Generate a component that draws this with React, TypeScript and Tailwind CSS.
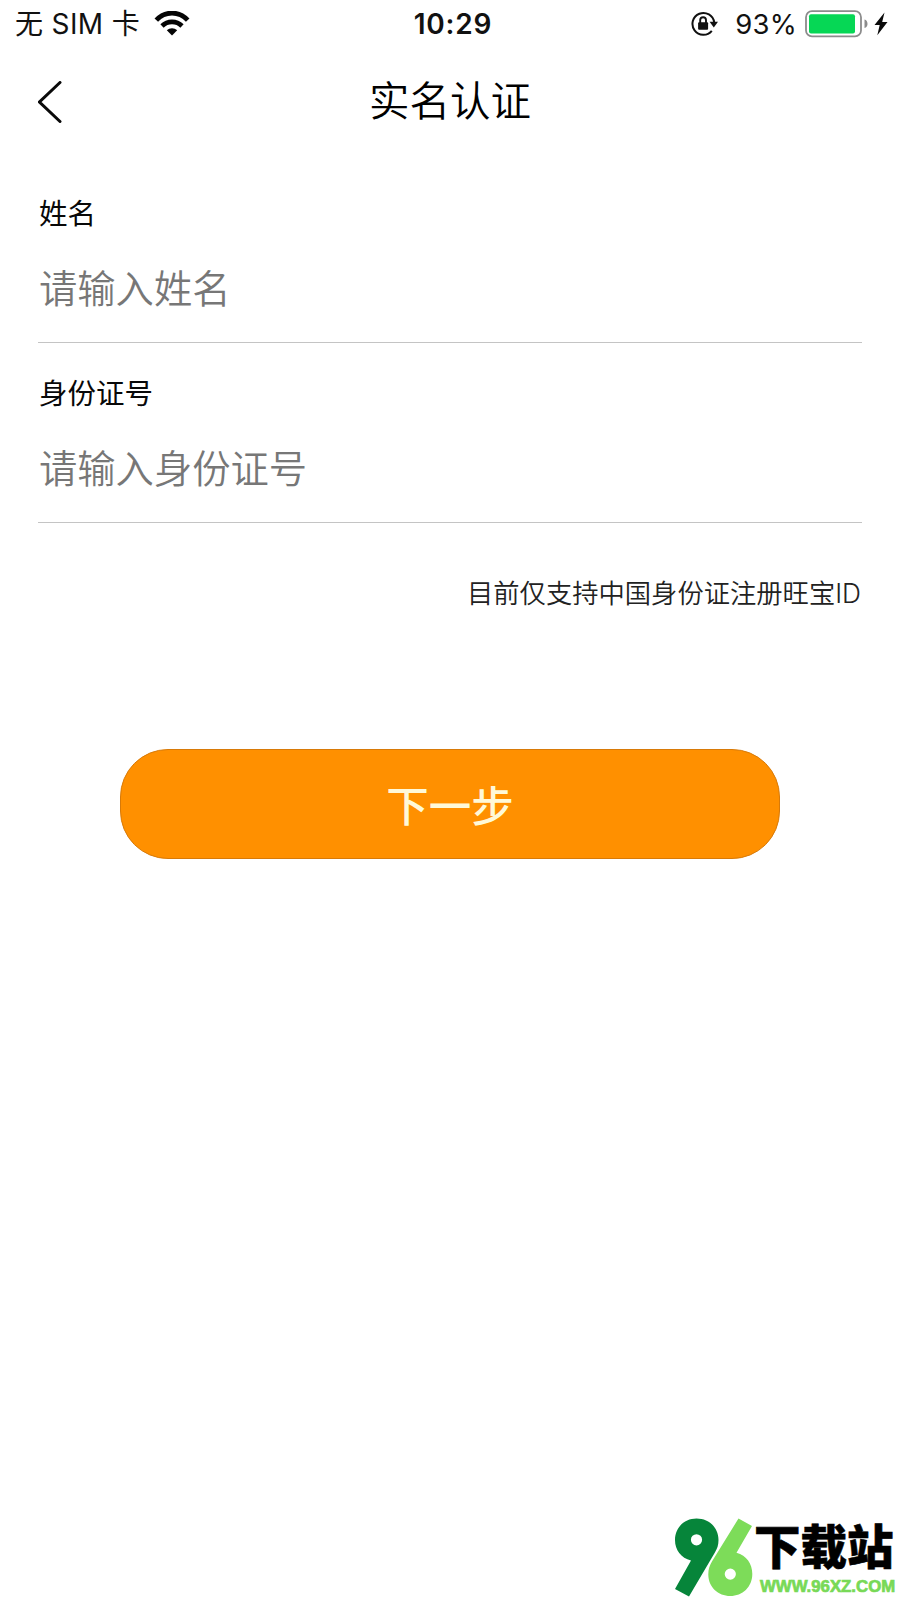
function WifiIcon() {
  return (
    <svg width="36" height="26" viewBox="0 0 36 26" fill="none" stroke="#050505">
      <path d="M2.300 9.200C11-.3 25-.3 33.700 9.200" strokeWidth="4.800" />
      <path d="M8 15C13.500 9.500 22.500 9.500 28 15" strokeWidth="4.600" />
      <path d="M18 24.500l-5.200-5.200c2.900-2.900 7.500-2.900 10.400 0z" fill="#050505" stroke="none" />
    </svg>
  );
}

function RotationLockIcon() {
  return (
    <svg width="28" height="26" viewBox="0 0 28 26" fill="none" stroke="#111">
      <path d="M20.800 19.800A10.900 10.900 0 1 1 23.200 11.500" strokeWidth="2" />
      <path d="M18.600 10.800h8.400l-4.200 5.800z" fill="#111" stroke="none" />
      <rect x="7.100" y="11.200" width="10" height="7.600" rx="1" fill="#111" stroke="none" />
      <path d="M9.200 12V9.100a2.900 2.900 0 0 1 5.800 0V12" strokeWidth="1.900" />
    </svg>
  );
}

function BatteryIcon() {
  return (
    <svg width="64" height="28" viewBox="0 0 64 28">
      <rect x="1" y="1.200" width="55" height="25.200" rx="6" fill="#fff" stroke="#8c8c8c" strokeWidth="1.800" />
      <rect x="4" y="4.200" width="46" height="19.200" rx="2" fill="#06d755" />
      <path d="M59.500 9.500c4 1 4 7.600 0 8.600z" fill="#8c8c8c" />
    </svg>
  );
}

function BoltIcon() {
  return (
    <svg width="14" height="24" viewBox="0 0 14 24">
      <path d="M10.500.5L.5 13h5.200L3.300 23.200 13.500 10H8.200z" fill="#0a0a0a" />
    </svg>
  );
}

function Logo96() {
  return (
    <svg width="80" height="82" viewBox="0 0 80 82">
      <path
        fill="#06853a"
        fillRule="evenodd"
        d="M22.500 1.500C34.500 1.500 44.500 10 44.500 23c0 5-1.200 8.500-3.600 12.500L15 79.500 1 72l16-28.500C7 41 1 33 1 23 1 10 11 1.500 22.500 1.500zM22.500 17.200a5.600 5.600 0 1 0 0 11.200 5.600 5.600 0 0 0 0-11.200z"
      />
      <path
        fill="#7ddc59"
        fillRule="evenodd"
        d="M64.500 1.500L78 9 62.500 35.800C72.500 38.500 78.300 47 78.300 57 78.300 70 68.500 79 56.300 79S34.300 70 34.300 57.500c0-5 1.200-9 3.800-13.200zM56.300 51.500a5.600 5.600 0 1 0 0 11.200 5.600 5.600 0 0 0 0-11.200z"
      />
    </svg>
  );
}

function Field({ label, placeholder }: { label: string; placeholder: string }) {
  return (
    <div className="flex h-[180px] flex-col border-b border-[#c4c4c4] pl-px">
      <div className="mt-[33px] text-[28.500px] leading-[36px] text-[#080808]">{label}</div>
      <div className="mt-[33px] text-[38.300px] leading-[48px] font-[350] text-[#777]">{placeholder}</div>
    </div>
  );
}

export default function App() {
  return (
    <div className="flex h-[1600px] w-[900px] flex-col overflow-hidden bg-white font-['Inter','Noto_Sans_CJK_SC',sans-serif] text-[#111]">
      <header className="grid h-[48px] grid-cols-[1fr_auto_1fr] items-center pr-[12px] pl-[15px]">
        <div className="flex h-[48px] items-center gap-[14px]">
          <span className="text-[28px] leading-[48px] tracking-[0.35px] whitespace-nowrap">无 SIM 卡</span>
          <WifiIcon />
        </div>
        <div className="h-[48px] pl-[3px] text-[28px] leading-[49px] font-semibold tracking-[0.8px]">10:29</div>
        <div className="flex h-[48px] items-center justify-end">
          <RotationLockIcon />
          <span className="ml-[16px] text-[27.500px] leading-[49px] tracking-[0.2px]">93%</span>
          <span className="ml-[8px]"><BatteryIcon /></span>
          <span className="ml-[5px]"><BoltIcon /></span>
        </div>
      </header>

      <nav className="grid h-[108px] grid-cols-[1fr_auto_1fr] items-center px-[38px]">
        <svg width="26" height="42" viewBox="0 0 26 42" fill="none" stroke="#0a0a0a" strokeWidth="3">
          <path d="M22 1.500L1.500 21 22 40.500" strokeLinecap="round" />
        </svg>
        <h1 className="text-[40.500px] leading-[60px] font-[350] text-black">实名认证</h1>
      </nav>

      <main className="flex flex-col px-[38px] pt-[7px]">
        <Field label="姓名" placeholder="请输入姓名" />
        <Field label="身份证号" placeholder="请输入身份证号" />
        <p className="mt-[51px] pr-px text-right text-[26.300px] leading-[40px] font-[350] text-[#222]">目前仅支持中国身份证注册旺宝ID</p>
        <button className="mt-[135px] h-[110px] w-[660px] self-center rounded-[48px] border border-[#d87a08] bg-[#ff9000] pt-[6px] text-[42.500px] leading-[60px] font-medium text-[#fff9d8]">
          下一步
        </button>
      </main>

      <footer className="mt-auto flex h-[83px] justify-end pr-[3px]">
        <Logo96 />
        <div className="flex w-[143px] flex-col">
          <div className="text-[46.500px] leading-[60px] font-black whitespace-nowrap text-black [-webkit-text-stroke:0.6px_#000]">下载站</div>
          <div className="pl-[6px] font-['Liberation_Sans',sans-serif] text-[16.800px] leading-[19px] font-bold whitespace-nowrap text-[#78d957] [-webkit-text-stroke:0.7px_#78d957]">WWW.96XZ.COM</div>
        </div>
      </footer>
    </div>
  );
}
